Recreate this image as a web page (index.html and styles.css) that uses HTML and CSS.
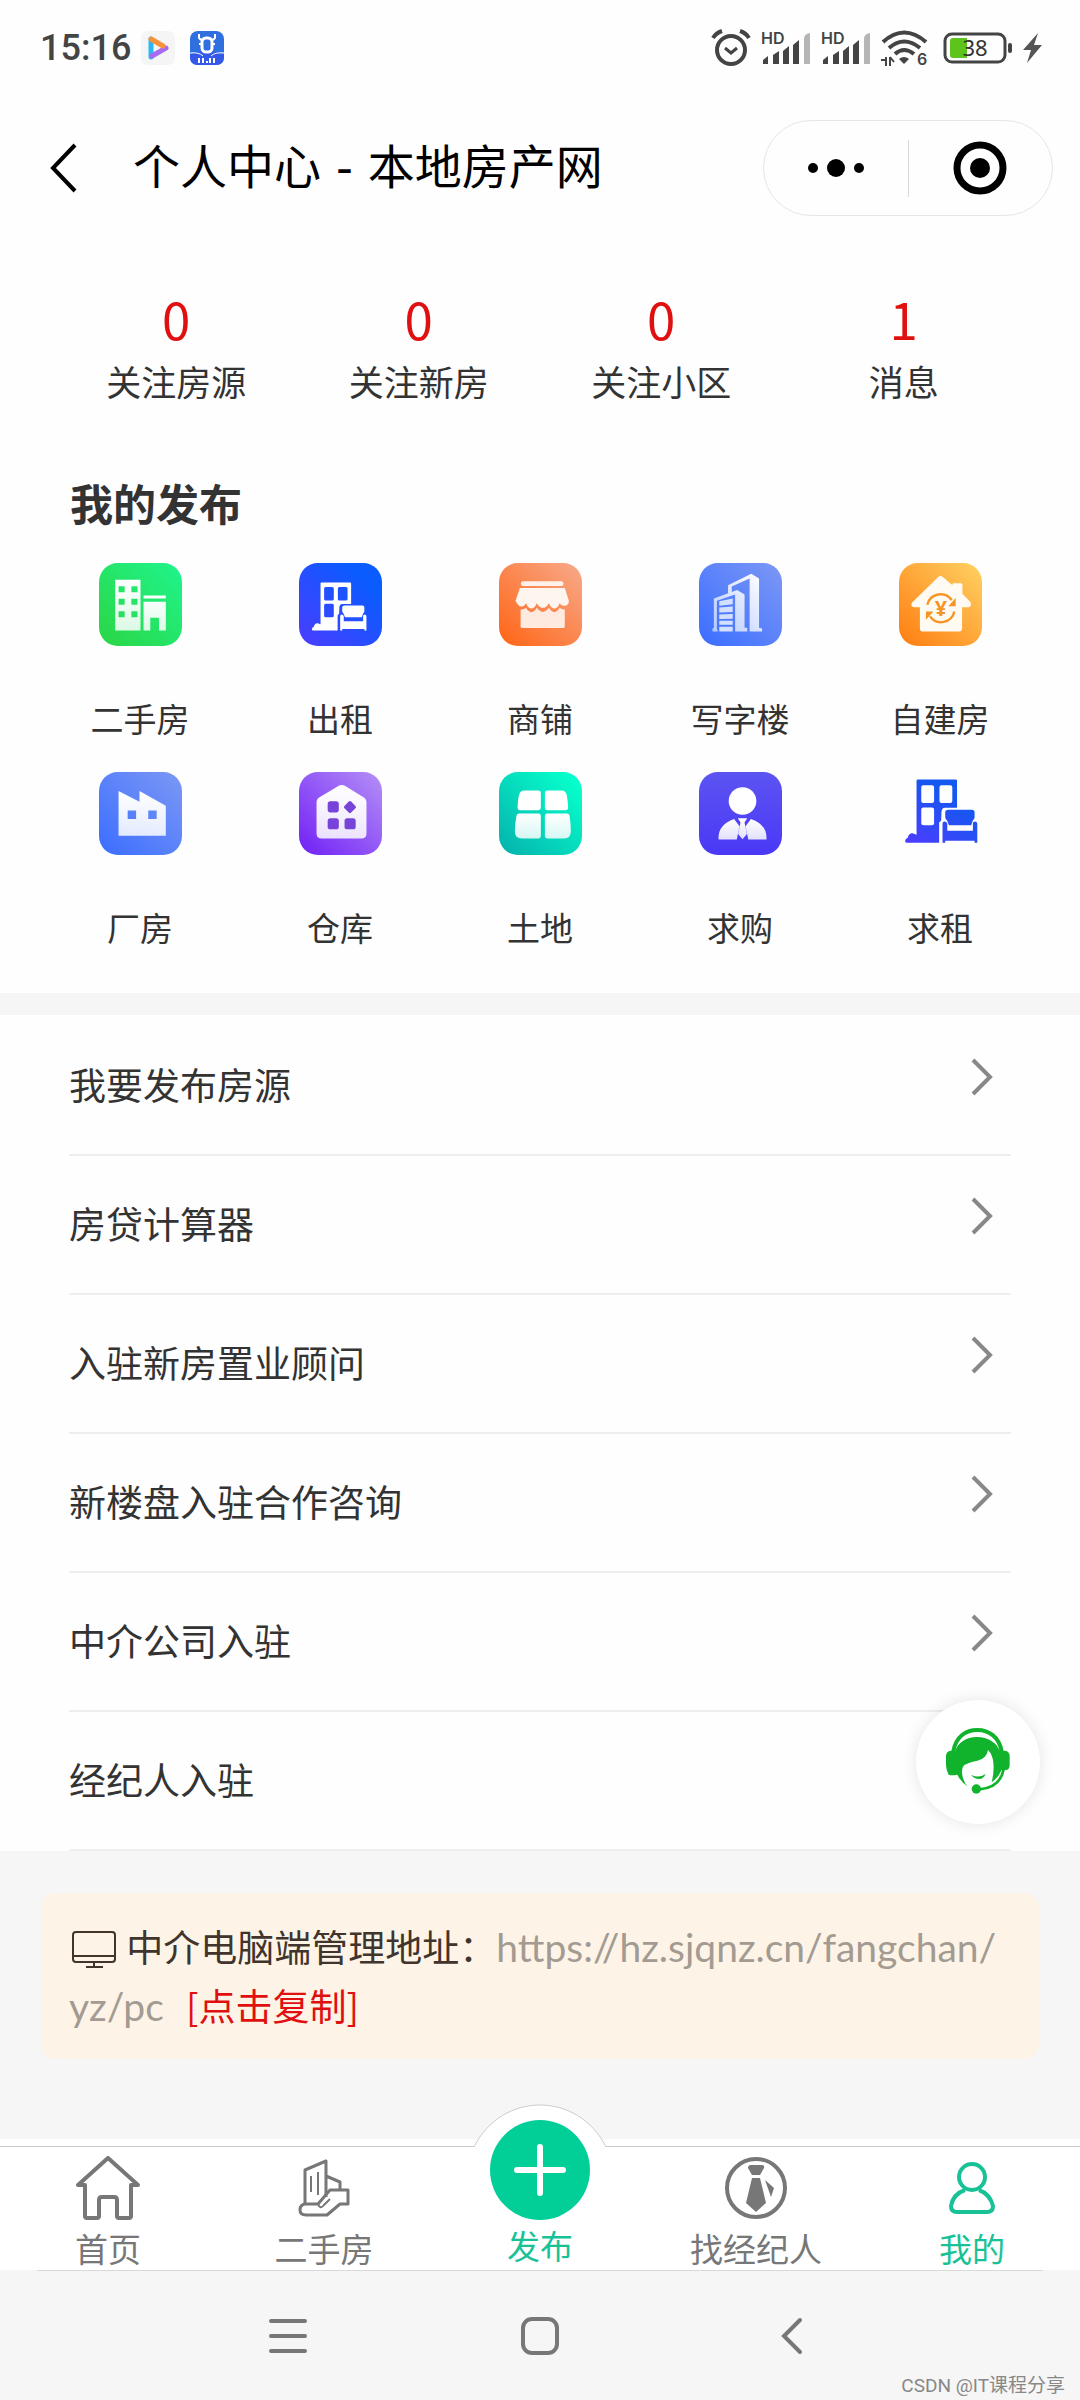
FILE: index.html
```
<!DOCTYPE html>
<html lang="zh-CN">
<head>
    <meta charset="UTF-8">
    <meta name="viewport" content="width=device-width, initial-scale=1.0">
    <title>个人中心 - 本地房产网</title>
    <link rel="stylesheet" href="styles.css">
</head>
<body>
    <!-- Shared shapes and gradients -->
    <svg class="defs" width="0" height="0" aria-hidden="true">
        <defs>
            <linearGradient id="green" x1="1" y1="0" x2="0" y2="1"><stop offset="0" stop-color="#1ff58d"/><stop offset="1" stop-color="#2bd544"/></linearGradient>
            <linearGradient id="blue" x1="1" y1="0" x2="0" y2="1"><stop offset="0.2" stop-color="#0a5cff"/><stop offset="1" stop-color="#4c3cff"/></linearGradient>
            <linearGradient id="orange" x1="1" y1="0" x2="0" y2="1"><stop offset="0" stop-color="#f7aa8b"/><stop offset="1" stop-color="#ff6414"/></linearGradient>
            <linearGradient id="sky" x1="1" y1="0" x2="0" y2="1"><stop offset="0" stop-color="#7d98f5"/><stop offset="1" stop-color="#3a6dff"/></linearGradient>
            <linearGradient id="amber" x1="1" y1="0" x2="0" y2="1"><stop offset="0" stop-color="#ffd263"/><stop offset="1" stop-color="#ff7c10"/></linearGradient>
            <linearGradient id="purple" x1="1" y1="0" x2="0" y2="1"><stop offset="0" stop-color="#b490f7"/><stop offset="1" stop-color="#711ff5"/></linearGradient>
            <linearGradient id="teal" x1="1" y1="0" x2="0" y2="1"><stop offset="0.1" stop-color="#06ffcb"/><stop offset="1" stop-color="#05b0ac"/></linearGradient>
            <linearGradient id="indigo" x1="0" y1="0" x2="0" y2="1"><stop offset="0" stop-color="#5c54f2"/><stop offset="1" stop-color="#4a38f5"/></linearGradient>
            <linearGradient id="rentBlue" gradientUnits="userSpaceOnUse" x1="150" y1="0" x2="20" y2="190"><stop offset="0.2" stop-color="#1458f0"/><stop offset="1" stop-color="#4c3cff"/></linearGradient>
            <linearGradient id="shine" x1="0" y1="0" x2="0" y2="1"><stop offset="0" stop-color="#fff"/><stop offset="1" stop-color="#fff" stop-opacity="0.84"/></linearGradient>
            <linearGradient id="slab" x1="1" y1="0" x2="0" y2="1"><stop offset="0" stop-color="#fff"/><stop offset="1" stop-color="#b4c9ff"/></linearGradient>
            <symbol id="rent" viewBox="0 0 214 188" overflow="visible">
                <path fill-rule="evenodd" d="M38 0H150Q154 0 154 4V84H118Q110 84 108 94L107 122L101 128V188H4C-3 184 1 176 8 173C10 163 16 158 24 160Q31 163 34 164V4Q34 0 38 0ZM54 17Q48 17 48 23V64Q48 70 54 70H80Q86 70 86 64V23Q86 17 80 17ZM108 17Q102 17 102 23V64Q102 70 108 70H134Q140 70 140 64V23Q140 17 134 17ZM54 83Q48 83 48 89V130Q48 136 54 136H80Q86 136 86 130V89Q86 83 80 83Z"/>
                <path d="M128 90H198Q206 90 206 98V112Q206 118 201 121L196 136H130L124 121Q119 118 119 112V98Q119 90 128 90Z"/>
                <path d="M111 131Q111 125 117 125T125 131V152H201V131Q201 125 207 125T214 131V188H206V182H119V188H111Z"/>
            </symbol>
            <symbol id="signal" viewBox="0 0 50 34" overflow="visible">
                <text x="0" y="13" class="hd">HD</text>
                <path d="M2 33v-4l5-4v8zM12 33v-9l6-4v13zM22 33V20l6-5v18zM32 33V14l6-5v24z" fill="#444"/>
                <path d="M43 33V8q0-5 6-6v31z" fill="#b5b5b5"/>
            </symbol>
        </defs>
    </svg>

    <div class="statusbar">
        <div class="status-left">
            <span class="time">15:16</span>
            <svg width="34" height="34" viewBox="0 0 34 34">
                <rect width="34" height="34" rx="7" fill="#f5f5f5"/>
                <path d="M10 8v18" stroke="#2db7f5" stroke-width="5" stroke-linecap="round"/>
                <path d="M11 25l14-8" stroke="#a66bf0" stroke-width="5" stroke-linecap="round"/>
                <path d="M10 8l12 7" stroke="#f7923a" stroke-width="5" stroke-linecap="round"/>
            </svg>
            <svg class="app-icon" width="34" height="34" viewBox="0 0 34 34">
                <rect width="34" height="34" rx="8" fill="#2f6fe0"/>
                <path d="M0 23q17-5 34 0v3q0 8-8 8H8q-8 0-8-8z" fill="#3458e8"/>
                <path d="M0 22q9-1 13 3M34 22q-9-1-13 3" stroke="#fff" stroke-width="1" fill="none"/>
                <path d="M9 3v4q1 2 4 2M25 3v4q-1 2-4 2M9 13h3M22 13h3" stroke="#fff" stroke-width="2" fill="none"/>
                <rect x="12" y="7" width="10" height="14" rx="4" fill="none" stroke="#fff" stroke-width="3"/>
                <path d="M9 27v5M13 27v5M20 27v5M24 27v5M16 31h2" stroke="#fff" stroke-width="2"/>
            </svg>
        </div>
        <div class="status-right">
            <svg width="40" height="38" viewBox="0 0 40 38" fill="none" stroke="#444" stroke-width="4">
                <circle cx="20" cy="21" r="14"/>
                <path d="M2 9q3-5 9-7M38 9q-3-5-9-7"/>
                <path d="M14 19l6 5 6-5" stroke-width="3"/>
            </svg>
            <svg class="signal" width="50" height="34"><use href="#signal"/></svg>
            <svg class="signal" width="50" height="34"><use href="#signal"/></svg>
            <svg class="wifi" width="48" height="38" viewBox="0 0 48 38" fill="none" stroke="#444" stroke-width="4">
                <path d="M2 13Q23-6 45 13M8 19q15-13 31 0M14 25q9-8 19 0"/>
                <path d="M18 30q5-4 10 0l-5 5z" fill="#444" stroke="none"/>
                <path d="M0 31h5v6M5 28v9M9 28v9M9 28l4 5" stroke-width="2"/>
                <text x="36" y="36" class="hd">6</text>
            </svg>
            <svg width="70" height="32" viewBox="0 0 70 32">
                <rect x="2" y="2" width="60" height="28" rx="7" fill="none" stroke="#444" stroke-width="3"/>
                <path d="M10 6h14v20H10q-3 0-3-3V9q0-3 3-3z" fill="#5cc41c"/>
                <rect x="65" y="11" width="4" height="10" rx="2" fill="#444"/>
                <text x="32" y="24" class="level">38</text>
            </svg>
            <svg width="19" height="30" viewBox="0 0 19 30"><path d="M15 0L0 17h8L4 30l15-18h-8z" fill="#555"/></svg>
        </div>
    </div>

    <header class="header">
        <button class="back" type="button" aria-label="返回">
            <svg width="28" height="52" viewBox="0 0 28 52"><path d="M25 3L3 26l22 23" fill="none" stroke="#000" stroke-width="4"/></svg>
        </button>
        <h1>个人中心 - 本地房产网</h1>
        <div class="capsule">
            <button type="button" aria-label="更多">
                <svg width="58" height="20" viewBox="0 0 58 20"><circle cx="6" cy="10" r="5"/><circle cx="29" cy="10" r="9"/><circle cx="52" cy="10" r="5"/></svg>
            </button>
            <span class="divider"></span>
            <button type="button" aria-label="关闭">
                <svg width="54" height="54" viewBox="0 0 54 54"><circle cx="27" cy="27" r="23" fill="none" stroke="#000" stroke-width="7"/><circle cx="27" cy="27" r="10"/></svg>
            </button>
        </div>
    </header>

    <main>
        <div class="stats">
            <a href="#"><b>0</b><span>关注房源</span></a>
            <a href="#"><b>0</b><span>关注新房</span></a>
            <a href="#"><b>0</b><span>关注小区</span></a>
            <a href="#"><b>1</b><span>消息</span></a>
        </div>

        <section class="publish">
            <h2>我的发布</h2>
            <div class="grid">
                <a href="#">
                    <svg class="tile" viewBox="0 0 246 246">
                        <rect width="246" height="246" rx="56" fill="url(#green)"/>
                        <path fill="url(#shine)" fill-rule="evenodd" d="M48 50h75v150H48zM58 69v18h18V69zM96 69v18h18V69zM58 106v18h18v-18zM96 106v18h18v-18zM58 143v18h18v-18zM96 143v18h18v-18z"/>
                        <path fill="url(#shine)" d="M132 96h66v9h-66zM132 115h66v85h-20v-38h-26v38h-20z"/>
                    </svg>
                    <span>二手房</span>
                </a>
                <a href="#">
                    <svg class="tile" viewBox="0 0 246 246">
                        <rect width="246" height="246" rx="56" fill="url(#blue)"/>
                        <use href="#rent" x="37" y="58" width="164" height="142" fill="#fff"/>
                    </svg>
                    <span>出租</span>
                </a>
                <a href="#">
                    <svg class="tile" viewBox="0 0 246 246">
                        <rect width="246" height="246" rx="56" fill="url(#orange)"/>
                        <rect x="65" y="54" width="126" height="14" rx="6" fill="#fff1e9"/>
                        <path fill="#fff5ef" d="M62 74H195L207 112Q208 127 192 127Q184 127 180 119Q173 135 164 135T148 119Q140 133 130 133T112 119Q105 135 96 135T80 119Q75 129 66 129T49 112Z"/>
                        <path fill="#ffeadf" d="M64 138Q74 139 80 133Q88 146 96 146T112 133Q121 145 130 145T148 133Q156 146 164 146T180 133Q186 139 195 138V188Q195 193 190 193H69Q64 193 64 188Z"/>
                    </svg>
                    <span>商铺</span>
                </a>
                <a href="#">
                    <svg class="tile" viewBox="0 0 246 246">
                        <rect width="246" height="246" rx="56" fill="url(#sky)"/>
                        <path fill="url(#slab)" d="M155 32l23 14v146l9 2v9h-37V46L97 70v20H86V66zM113 80l22 13v98l8 2v10h-36V93L53 112v82l3 9H40v-9l4-2v-87z"/>
                        <path fill="#d3e0ff" d="M60 113l40-8v17l-40 5zM60 132l40-3v16l-40 2zM60 153l40-2v14l-40 1zM60 171h40v12H60zM60 189h40v14H60z"/>
                    </svg>
                    <span>写字楼</span>
                </a>
                <a href="#">
                    <svg class="tile" viewBox="0 0 246 246">
                        <rect width="246" height="246" rx="56" fill="url(#amber)"/>
                        <path fill="#fffaf2" d="M117 41Q123 36 129 41L158 65L160 60H184Q188 60 188 65V91L211 115Q218 128 206 131H187V194Q187 203 178 203H70Q62 203 62 194V131H44Q32 128 39 117Z"/>
                        <path d="M84 124a40 40 0 0 1 72-14M164 144a40 40 0 0 1-72 14" fill="none" stroke="#f59524" stroke-width="7"/>
                        <path d="M168 104v24h-22zM80 168v-24h22z" fill="#f59524"/>
                        <text x="124" y="157" class="yuan">¥</text>
                    </svg>
                    <span>自建房</span>
                </a>
                <a href="#">
                    <svg class="tile" viewBox="0 0 246 246">
                        <rect width="246" height="246" rx="56" fill="url(#sky)"/>
                        <path fill="url(#shine)" fill-rule="evenodd" d="M58 56l62 32V56l78 44v89H58zM85 114v25h25v-25zM146 114v25h25v-25z"/>
                    </svg>
                    <span>厂房</span>
                </a>
                <a href="#">
                    <svg class="tile" viewBox="0 0 246 246">
                        <rect width="246" height="246" rx="56" fill="url(#purple)"/>
                        <path fill="url(#shine)" d="M118 41Q127 36 136 41L190 74Q200 80 200 90V182Q200 197 185 197H67Q52 197 52 182V90Q52 80 62 74Z"/>
                        <g fill="#7843d8">
                            <rect x="85" y="87" width="33" height="33" rx="8"/>
                            <rect x="85" y="137" width="33" height="33" rx="8"/>
                            <rect x="135" y="137" width="33" height="33" rx="8"/>
                            <rect x="137" y="90" width="28" height="28" rx="5" transform="rotate(45 151 104)"/>
                        </g>
                    </svg>
                    <span>仓库</span>
                </a>
                <a href="#">
                    <svg class="tile" viewBox="0 0 246 246">
                        <rect width="246" height="246" rx="56" fill="url(#teal)"/>
                        <path fill="#fff" d="M74 55h43q7 0 7 7v44q0 7-7 7H62q-7 0-7-7 0-20 4-36 4-15 15-15zM143 55h43q12 0 15 14 3 18 4 37 0 7-7 7h-55q-7 0-7-7V62q0-7 7-7z"/>
                        <path fill="url(#shine)" d="M59 123h58q7 0 7 7v60q0 7-7 7H68q-20 0-21-20 0-25 5-48 2-6 7-6zM143 123h58q7 0 8 6 4 24 4 46 0 22-20 22h-50q-7 0-7-7v-60q0-7 7-7z"/>
                    </svg>
                    <span>土地</span>
                </a>
                <a href="#">
                    <svg class="tile" viewBox="0 0 246 246">
                        <rect width="246" height="246" rx="56" fill="url(#indigo)"/>
                        <circle cx="129" cy="86" r="41" fill="#fff"/>
                        <path fill="url(#shine)" d="M104 139l16 22-8 39H58q-3-44 46-61zM154 139l-16 22 8 39h54q3-44-46-61zM115 137h28l-8 13 7 34-13 15-13-15 7-34z"/>
                    </svg>
                    <span>求购</span>
                </a>
                <a href="#">
                    <svg class="tile" viewBox="0 0 246 246">
                        <use href="#rent" x="18" y="22" width="214" height="188" fill="url(#rentBlue)"/>
                    </svg>
                    <span>求租</span>
                </a>
            </div>
        </section>

        <section class="menu">
            <ul>
                <li><a href="#">我要发布房源<svg class="arrow" viewBox="0 0 22 38"><path d="M2 2l17 17L2 36"/></svg></a></li>
                <li><a href="#">房贷计算器<svg class="arrow" viewBox="0 0 22 38"><path d="M2 2l17 17L2 36"/></svg></a></li>
                <li><a href="#">入驻新房置业顾问<svg class="arrow" viewBox="0 0 22 38"><path d="M2 2l17 17L2 36"/></svg></a></li>
                <li><a href="#">新楼盘入驻合作咨询<svg class="arrow" viewBox="0 0 22 38"><path d="M2 2l17 17L2 36"/></svg></a></li>
                <li><a href="#">中介公司入驻<svg class="arrow" viewBox="0 0 22 38"><path d="M2 2l17 17L2 36"/></svg></a></li>
                <li><a href="#">经纪人入驻<svg class="arrow" viewBox="0 0 22 38"><path d="M2 2l17 17L2 36"/></svg></a></li>
            </ul>
            <button class="service" type="button" aria-label="在线客服">
                <svg width="64" height="66" viewBox="0 0 192 198" fill="#12b32c">
                    <path d="M22 70C30 25 60 6 94 6s65 20 73 64" fill="none" stroke="#12b32c" stroke-width="12"/>
                    <path d="M14 68h14C35 45 60 27 93 27s60 18 68 41h16q14 2 14 16v28q0 14-12 14h-12q-12 26-30 36 8-30 5-58-2-24-16-38-4 26-32 32-30 6-40 14-10 12-4 34 4 18 14 28-18-10-30-34-18 4-26 0Q0 124 0 112V84q0-14 14-16z"/>
                    <path d="M75 140q22 12 44-2-6 15-20 15t-24-13z"/>
                    <path d="M173 124q-10 54-72 60" fill="none" stroke="#12b32c" stroke-width="8"/>
                    <circle cx="91" cy="183" r="14"/>
                </svg>
            </button>
        </section>

        <section class="notice-wrap">
            <p class="notice">
                <svg class="monitor" width="44" height="38" viewBox="0 0 44 38" fill="none" stroke="#40342c" stroke-width="2"><rect x="1" y="1" width="42" height="30" rx="3"/><path d="M1 25h42M22 31v5M14 36h17"/></svg>
                中介电脑端管理地址：<span class="url">https://hz.sjqnz.cn/fangchan/<wbr>yz/pc</span>
                <button class="copy" type="button">[点击复制]</button>
            </p>
        </section>
    </main>

    <nav class="tabbar">
        <a href="#">
            <svg width="64" height="64" viewBox="0 0 64 64" fill="none" stroke="#777" stroke-width="4" stroke-linejoin="round">
                <path d="M32 2L2 29h7v31q0 2 2 2h10q2 0 2-2V44q0-3 3-3h12q3 0 3 3v16q0 2 2 2h10q2 0 2-2V29h7z"/>
            </svg>
            <span>首页</span>
        </a>
        <a href="#">
            <svg width="64" height="64" viewBox="0 0 64 64" fill="none" stroke="#777" stroke-width="3" stroke-linejoin="round">
                <path d="M13 48V14l21-9v36M34 20l14 6v8"/>
                <path d="M19 20v16M26 16v23" stroke-width="2"/>
                <path d="M8 54q0-6 6-6h12l12-14h18v14h-8L35 59H14q-6 0-6-5z"/>
                <path d="M26 48q2 6 6 1l6-6" stroke-width="2"/>
            </svg>
            <span>二手房</span>
        </a>
        <a href="#" class="post">
            <svg class="bump" width="132" height="44" viewBox="0 0 132 44"><path d="M0 43C28-13 104-13 132 43V44H0Z" fill="#fff"/><path d="M0 43C28-13 104-13 132 43" fill="none" stroke="#ccc"/></svg>
            <svg class="plus" width="100" height="100" viewBox="0 0 100 100"><circle cx="50" cy="50" r="50" fill="#02cf98"/><path d="M50 27v46M27 50h46" stroke="#fff" stroke-width="6" stroke-linecap="round"/></svg>
            <span>发布</span>
        </a>
        <a href="#">
            <svg width="64" height="64" viewBox="0 0 64 64">
                <circle cx="32" cy="32" r="29" fill="none" stroke="#777" stroke-width="4"/>
                <path d="M27 9h11q3 0 2 3l-4 7h-8l-4-7q0-3 3-3zM28 22h8l6 25-10 9-10-9zM41 24l9 8-3 9z" fill="#777"/>
            </svg>
            <span>找经纪人</span>
        </a>
        <a href="#" class="active">
            <svg width="64" height="64" viewBox="0 0 64 64" fill="none" stroke="#19c296" stroke-width="4">
                <circle cx="32" cy="21" r="13"/>
                <path d="M25 34Q13 38 11 50q0 6 6 6h30q6 0 6-6Q50 38 39 34"/>
            </svg>
            <span>我的</span>
        </a>
    </nav>

    <footer class="system">
        <button type="button" aria-label="菜单"><svg width="40" height="40" viewBox="0 0 40 40"><path d="M3 5h34M3 20h34M3 35h34"/></svg></button>
        <button type="button" aria-label="主页"><svg width="40" height="40" viewBox="0 0 40 40"><rect x="3" y="3" width="34" height="34" rx="9"/></svg></button>
        <button type="button" aria-label="后退"><svg width="40" height="40" viewBox="0 0 40 40"><path d="M28 4L12 20l16 16"/></svg></button>
        <span class="watermark">CSDN @IT课程分享</span>
    </footer>
</body>
</html>
```

FILE: styles.css
```
* {
    box-sizing: border-box;
}
body {
    font-family: "Noto Sans CJK SC", sans-serif;
    background-color: #fefefe;
    color: #333;
    margin: 0;
    padding: 0;
}
a {
    color: inherit;
    text-decoration: none;
}
button {
    font: inherit;
    background: none;
    border: none;
    padding: 0;
    cursor: pointer;
}
svg {
    display: block;
}
.defs {
    position: absolute;
}

/* status bar */
.statusbar {
    display: flex;
    justify-content: space-between;
    align-items: center;
    height: 96px;
    padding: 0 38px 0 40px;
}
.status-left, .status-right {
    display: flex;
    align-items: center;
    gap: 10px;
}
.time {
    font-family: Roboto, sans-serif;
    font-size: 36px;
    font-weight: 500;
    color: #444;
}
.app-icon {
    margin-left: 5px;
}
.signal, .wifi {
    overflow: visible;
}
.wifi {
    margin-right: 4px;
}
.hd {
    font-family: Inter, sans-serif;
    font-size: 16px;
    font-weight: 600;
    fill: #444;
    stroke: none;
}
.level {
    font-family: "Noto Sans", sans-serif;
    font-size: 22px;
    fill: #333;
    text-anchor: middle;
}

/* title bar */
.header {
    display: flex;
    align-items: center;
    height: 144px;
    padding: 0 27px 0 50px;
}
.header h1 {
    flex: 1;
    margin: 0 0 0 55px;
    font-family: "DejaVu Sans", "Noto Sans CJK SC", sans-serif;
    font-size: 47px;
    font-weight: 400;
    line-height: 64px;
    color: #000;
}
.capsule {
    display: flex;
    align-items: center;
    width: 290px;
    height: 96px;
    border: 1px solid #e6e6e6;
    border-radius: 48px;
}
.capsule button {
    flex: 1;
    display: flex;
    justify-content: center;
}
.divider {
    width: 1px;
    height: 57px;
    background: #d9d9d9;
}

/* counters */
.stats {
    display: grid;
    grid-template-columns: repeat(4, 1fr);
    padding: 48px 55px 0;
}
.stats a {
    display: flex;
    flex-direction: column;
    align-items: center;
    gap: 11px;
}
.stats b {
    font-size: 51px;
    font-weight: 400;
    line-height: 60px;
    color: #e01010;
}
.stats span {
    font-size: 35px;
    line-height: 44px;
}

/* my listings */
.publish {
    padding: 69px 40px 44px;
}
.publish h2 {
    margin: 0 30px 31px;
    font-size: 43px;
    line-height: 60px;
}
.grid {
    display: grid;
    grid-template-columns: repeat(5, 1fr);
    row-gap: 32px;
}
.grid a {
    display: flex;
    flex-direction: column;
    align-items: center;
    gap: 50px;
    font-size: 33px;
    line-height: 44px;
}
.tile {
    width: 83px;
    height: 83px;
}
.yuan {
    font-family: "Noto Sans", sans-serif;
    font-size: 64px;
    font-weight: 700;
    fill: #f59524;
    text-anchor: middle;
}

/* menu */
.menu {
    position: relative;
    border-top: 22px solid #f6f6f6;
}
.menu ul {
    list-style: none;
    margin: 0;
    padding: 2px 69px 0;
}
.menu li {
    border-bottom: 2px solid #eee;
}
.menu a {
    display: flex;
    align-items: center;
    justify-content: space-between;
    height: 137px;
    padding: 0 18px 4px 0;
    font-size: 37px;
}
.arrow {
    width: 22px;
    height: 38px;
    margin-bottom: 14px;
    fill: none;
    stroke: #888;
    stroke-width: 4;
}
.service {
    position: absolute;
    right: 40px;
    bottom: 27px;
    width: 124px;
    height: 124px;
    display: flex;
    justify-content: center;
    padding-top: 28px;
    background: #fff;
    border-radius: 50%;
    box-shadow: 0 0 16px rgba(0, 0, 0, 0.1);
}

/* agent notice */
.notice-wrap {
    padding: 42px 41px 87px;
    background: #f6f6f6;
}
.notice {
    margin: 0;
    padding: 24px 28px;
    background: #fdf4e7;
    border-radius: 14px;
    color: #40342c;
    font-size: 37px;
    line-height: 59px;
}
.monitor {
    display: inline-block;
    vertical-align: -7px;
    margin: 0 2px 0 3px;
}
.url {
    font-family: Lato, sans-serif;
    font-size: 39px;
    line-height: 1;
    color: #a39b92;
}
.copy {
    margin-left: 14px;
    color: #e01010;
}

/* bottom tabs */
.tabbar {
    display: grid;
    grid-template-columns: repeat(5, 1fr);
    background: #fff;
    border-top: 1px solid #ccc;
    box-shadow: 0 -7px 0 #fff;
    color: #777;
}
.tabbar a {
    display: flex;
    flex-direction: column;
    align-items: center;
    gap: 8px;
    padding: 9px 0 2px;
    font-size: 33px;
    line-height: 40px;
}
.tabbar .post {
    position: relative;
    justify-content: flex-end;
    padding-bottom: 5px;
    color: #19c296;
}
.bump, .plus {
    position: absolute;
    left: 50%;
    transform: translateX(-50%);
}
.bump {
    top: -43px;
}
.plus {
    top: -27px;
}
.tabbar .active {
    color: #19c296;
}

/* system keys */
.system {
    position: relative;
    display: flex;
    justify-content: center;
    gap: 212px;
    height: 130px;
    padding-top: 46px;
    background: #f6f6f6;
}
.system::before {
    content: "";
    position: absolute;
    top: 0;
    left: 37px;
    right: 37px;
    border-top: 1px solid #d9d9d9;
}
.system button {
    height: 40px;
}
.system svg {
    fill: none;
    stroke: #777;
    stroke-width: 4;
    stroke-linecap: round;
}
.watermark {
    position: absolute;
    right: 15px;
    bottom: 3px;
    font-family: Roboto, "Noto Sans CJK SC", sans-serif;
    font-size: 19px;
    color: #888;
}
```
